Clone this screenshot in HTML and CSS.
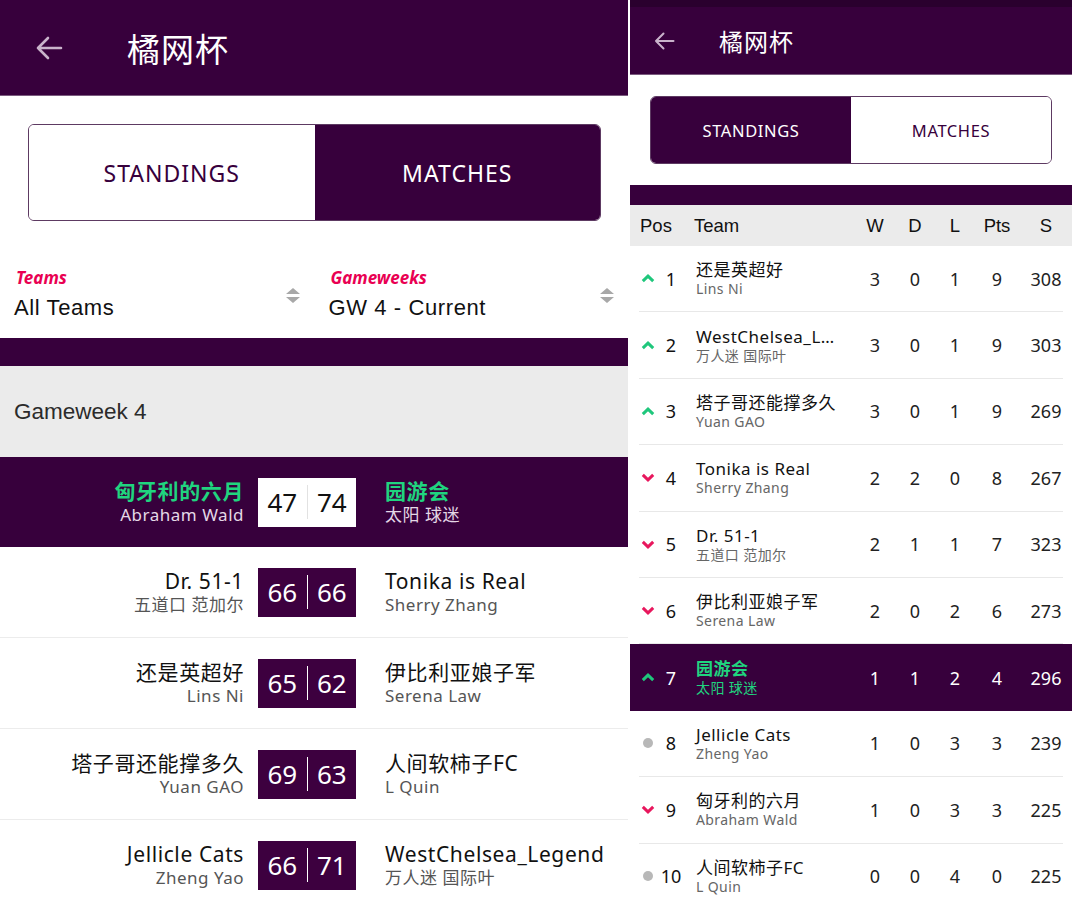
FILE: index.html
```html
<!DOCTYPE html>
<html lang="zh">
<head>
<meta charset="utf-8">
<title>橘网杯</title>
<link rel="stylesheet" href="styles.css">
</head>
<body>
<div class="page">
  <!-- LEFT: MATCHES -->
  <section class="panel left">
    <header class="topbar big">
      <svg class="back" width="28" height="24" viewBox="0 0 28 24"><path d="M26 12H3M13 2L3 12l10 10" fill="none" stroke="#c9b3cb" stroke-width="2.6" stroke-linecap="round" stroke-linejoin="round"/></svg>
      <h1 class="title">橘网杯</h1>
    </header>
    <div class="toggle big">
      <div class="tab">STANDINGS</div>
      <div class="tab on">MATCHES</div>
    </div>
    <div class="filters">
      <div class="filter">
        <div class="ftext"><div class="flabel">Teams</div><div class="fvalue">All Teams</div></div>
        <svg class="sort" width="14" height="16" viewBox="0 0 14 16"><path d="M7 0L14 6H0Z M0 9H14L7 15Z" fill="#a8a8a8"/></svg>
      </div>
      <div class="filter">
        <div class="ftext"><div class="flabel">Gameweeks</div><div class="fvalue">GW 4 - Current</div></div>
        <svg class="sort" width="14" height="16" viewBox="0 0 14 16"><path d="M7 0L14 6H0Z M0 9H14L7 15Z" fill="#a8a8a8"/></svg>
      </div>
    </div>
    <div class="darkbar"></div>
    <div class="gwband">Gameweek 4</div>
    <div class="match hl">
      <div class="side home"><div class="tname">匈牙利的六月</div><div class="mname">Abraham Wald</div></div>
      <div class="score"><span>47</span><span>74</span></div>
      <div class="side away"><div class="tname">园游会</div><div class="mname">太阳 球迷</div></div>
    </div>
    <div class="match">
      <div class="side home"><div class="tname">Dr. 51-1</div><div class="mname">五道口 范加尔</div></div>
      <div class="score"><span>66</span><span>66</span></div>
      <div class="side away"><div class="tname">Tonika is Real</div><div class="mname">Sherry Zhang</div></div>
    </div>
    <div class="match">
      <div class="side home"><div class="tname">还是英超好</div><div class="mname">Lins Ni</div></div>
      <div class="score"><span>65</span><span>62</span></div>
      <div class="side away"><div class="tname">伊比利亚娘子军</div><div class="mname">Serena Law</div></div>
    </div>
    <div class="match">
      <div class="side home"><div class="tname">塔子哥还能撑多久</div><div class="mname">Yuan GAO</div></div>
      <div class="score"><span>69</span><span>63</span></div>
      <div class="side away"><div class="tname">人间软柿子FC</div><div class="mname">L Quin</div></div>
    </div>
    <div class="match">
      <div class="side home"><div class="tname">Jellicle Cats</div><div class="mname">Zheng Yao</div></div>
      <div class="score"><span>66</span><span>71</span></div>
      <div class="side away"><div class="tname">WestChelsea_Legend</div><div class="mname">万人迷 国际叶</div></div>
    </div>
  </section>

  <!-- RIGHT: STANDINGS -->
  <section class="panel right">
    <header class="topbar small">
      <svg class="back" width="21" height="18" viewBox="0 0 21 18"><path d="M19.5 9H2M9.5 1.5L2 9l7.5 7.5" fill="none" stroke="#c9b3cb" stroke-width="2" stroke-linecap="round" stroke-linejoin="round"/></svg>
      <h1 class="title">橘网杯</h1>
    </header>
    <div class="toggle small">
      <div class="tab on">STANDINGS</div>
      <div class="tab">MATCHES</div>
    </div>
    <div class="darkbar thin"></div>
    <div class="thead">
      <div class="c-pos">Pos</div><div class="c-team">Team</div>
      <div class="c-n">W</div><div class="c-n">D</div><div class="c-n">L</div><div class="c-n">Pts</div><div class="c-gap"></div><div class="c-n">S</div>
    </div>
    <div class="srow">
      <svg class="mv up" width="14" height="9" viewBox="0 0 14 9"><path d="M1.8 7.2L7 2.2l5.2 5" fill="none" stroke-width="3"/></svg>
      <div class="pos">1</div><div class="team"><div class="tname">还是英超好</div><div class="mname">Lins Ni</div></div>
      <div class="n">3</div><div class="n">0</div><div class="n">1</div><div class="n">9</div><div></div><div class="n">308</div>
    </div>
    <div class="srow">
      <svg class="mv up" width="14" height="9" viewBox="0 0 14 9"><path d="M1.8 7.2L7 2.2l5.2 5" fill="none" stroke-width="3"/></svg>
      <div class="pos">2</div><div class="team"><div class="tname" title="WestChelsea_Legend">WestChelsea_L…</div><div class="mname">万人迷 国际叶</div></div>
      <div class="n">3</div><div class="n">0</div><div class="n">1</div><div class="n">9</div><div></div><div class="n">303</div>
    </div>
    <div class="srow">
      <svg class="mv up" width="14" height="9" viewBox="0 0 14 9"><path d="M1.8 7.2L7 2.2l5.2 5" fill="none" stroke-width="3"/></svg>
      <div class="pos">3</div><div class="team"><div class="tname">塔子哥还能撑多久</div><div class="mname">Yuan GAO</div></div>
      <div class="n">3</div><div class="n">0</div><div class="n">1</div><div class="n">9</div><div></div><div class="n">269</div>
    </div>
    <div class="srow">
      <svg class="mv down" width="14" height="9" viewBox="0 0 14 9"><path d="M1.8 1.8L7 6.8l5.2-5" fill="none" stroke-width="3"/></svg>
      <div class="pos">4</div><div class="team"><div class="tname">Tonika is Real</div><div class="mname">Sherry Zhang</div></div>
      <div class="n">2</div><div class="n">2</div><div class="n">0</div><div class="n">8</div><div></div><div class="n">267</div>
    </div>
    <div class="srow">
      <svg class="mv down" width="14" height="9" viewBox="0 0 14 9"><path d="M1.8 1.8L7 6.8l5.2-5" fill="none" stroke-width="3"/></svg>
      <div class="pos">5</div><div class="team"><div class="tname">Dr. 51-1</div><div class="mname">五道口 范加尔</div></div>
      <div class="n">2</div><div class="n">1</div><div class="n">1</div><div class="n">7</div><div></div><div class="n">323</div>
    </div>
    <div class="srow">
      <svg class="mv down" width="14" height="9" viewBox="0 0 14 9"><path d="M1.8 1.8L7 6.8l5.2-5" fill="none" stroke-width="3"/></svg>
      <div class="pos">6</div><div class="team"><div class="tname">伊比利亚娘子军</div><div class="mname">Serena Law</div></div>
      <div class="n">2</div><div class="n">0</div><div class="n">2</div><div class="n">6</div><div></div><div class="n">273</div>
    </div>
    <div class="srow hl">
      <svg class="mv up" width="14" height="9" viewBox="0 0 14 9"><path d="M1.8 7.2L7 2.2l5.2 5" fill="none" stroke-width="3"/></svg>
      <div class="pos">7</div><div class="team"><div class="tname">园游会</div><div class="mname">太阳 球迷</div></div>
      <div class="n">1</div><div class="n">1</div><div class="n">2</div><div class="n">4</div><div></div><div class="n">296</div>
    </div>
    <div class="srow">
      <span class="mv dot"></span>
      <div class="pos">8</div><div class="team"><div class="tname">Jellicle Cats</div><div class="mname">Zheng Yao</div></div>
      <div class="n">1</div><div class="n">0</div><div class="n">3</div><div class="n">3</div><div></div><div class="n">239</div>
    </div>
    <div class="srow">
      <svg class="mv down" width="14" height="9" viewBox="0 0 14 9"><path d="M1.8 1.8L7 6.8l5.2-5" fill="none" stroke-width="3"/></svg>
      <div class="pos">9</div><div class="team"><div class="tname">匈牙利的六月</div><div class="mname">Abraham Wald</div></div>
      <div class="n">1</div><div class="n">0</div><div class="n">3</div><div class="n">3</div><div></div><div class="n">225</div>
    </div>
    <div class="srow">
      <span class="mv dot"></span>
      <div class="pos">10</div><div class="team"><div class="tname">人间软柿子FC</div><div class="mname">L Quin</div></div>
      <div class="n">0</div><div class="n">0</div><div class="n">4</div><div class="n">0</div><div></div><div class="n">225</div>
    </div>
  </section>
</div>
</body>
</html>
```

FILE: styles.css
```css
* { box-sizing: border-box; margin: 0; padding: 0; }
html, body { background: #fff; }
body {
  width: 1080px;
  height: 907px;
  overflow: hidden;
  font-family: "Noto Sans", "Noto Sans CJK SC", sans-serif;
  color: #111;
}
.page { display: flex; gap: 2px; height: 907px; }
.panel { overflow: hidden; display: flex; flex-direction: column; }
.left { width: 628px; }
.right { width: 442px; }

/* top bar */
.topbar {
  background: #37003c;
  display: flex;
  align-items: center;
  color: #fff;
  flex: none;
}
.topbar .title { font-family: "Noto Sans CJK SC", sans-serif; font-weight: 400; color: #fff; }
.topbar.big { height: 96px; padding-left: 35px; border-bottom: 1px solid #7a5a7e; }
.topbar.big .title { font-size: 33px; margin-left: 64px; letter-spacing: 1px; }
.topbar.small { height: 75px; padding-left: 24px; border-top: 7px solid #2a002e; border-bottom: 1px solid #7a5a7e; }
.topbar.small .title { font-size: 24px; margin-left: 44px; letter-spacing: 1px; }

/* toggle */
.toggle {
  display: flex;
  border: 1.5px solid #5d3a62;
  border-radius: 6px;
  overflow: hidden;
  flex: none;
}
.toggle .tab {
  flex: 1;
  display: flex; align-items: center; justify-content: center;
  color: #37003c;
  background: #fff;
}
.toggle .tab.on { background: #37003c; color: #fff; }
.toggle.big { margin: 28px 27px 0 28px; height: 97px; }
.toggle.big .tab { font-size: 23px; letter-spacing: 1px; }
.toggle.small { margin: 21px 20px 0 20px; height: 68px; }
.toggle.small .tab { font-size: 16.5px; letter-spacing: 0.6px; }

/* filters */
.filters { display: flex; gap: 29px; padding: 44px 14px 0 14px; height: 117px; flex: none; }
.filter { flex: 1; display: flex; align-items: center; justify-content: space-between; height: 58px; }
.flabel { color: #e90052; font-style: italic; font-weight: 700; font-size: 17px; line-height: 23px; padding-left: 2px; }
.fvalue { font-family: "Liberation Sans", "Noto Sans CJK SC", sans-serif; font-size: 22px; letter-spacing: 0.6px; line-height: 30px; margin-top: 4px; color: #111; }
.sort { margin-top: 4px; }

.darkbar { background: #37003c; height: 28px; flex: none; }
.darkbar.thin { height: 20px; margin-top: 21px; }
.gwband {
  background: #ebebeb;
  height: 91px;
  display: flex; align-items: center;
  padding-left: 14px;
  font-family: "Liberation Sans", sans-serif;
  font-size: 22.5px;
  color: #2b2b2b;
  flex: none;
}

/* matches */
.match {
  display: flex;
  align-items: center;
  height: 91px;
  border-bottom: 1.5px solid #ececec;
  flex: none;
}
.match.hl { background: #37003c; height: 90px; border-bottom: none; }
.side { display: flex; flex-direction: column; }
.side.home { width: 244px; text-align: right; align-items: flex-end; }
.side.away { margin-left: 29px; }
.side .tname { font-size: 21px; letter-spacing: 0.6px; line-height: 25px; color: #111; white-space: nowrap; }
.side .mname { font-size: 17px; letter-spacing: 0.5px; line-height: 21px; color: #555; white-space: nowrap; }
.match.hl .tname { color: #20d47f; font-weight: 700; }
.match.hl .mname { color: #e4d8e6; }
.score {
  margin-left: 14px;
  width: 98px; height: 49px;
  background: #3d003f;
  display: flex; align-items: center;
}
.score span {
  flex: 1; text-align: center;
  color: #fff; font-size: 26px; line-height: 49px;
}
.score span + span { border-left: 1.5px solid #fff; line-height: 34px; }
.match.hl .score { background: #fff; }
.match.hl .score span { color: #111; }
.match.hl .score span + span { border-left-color: #e2e2e2; }

/* standings */
.thead, .srow {
  display: grid;
  grid-template-columns: 17px 30px 1fr 40px 40px 40px 44px 10px 34px;
  align-items: center;
}
.thead {
  background: #ebebeb;
  height: 41px;
  padding: 0 9px;
  font-family: "Liberation Sans", sans-serif;
  font-size: 18.5px;
  color: #111;
  flex: none;
}
.thead .c-pos { grid-column: 1 / span 2; padding-left: 1px; }
.thead .c-team { padding-left: 8px; }
.thead .c-n { text-align: center; }
.srow {
  margin: 0 9px;
  height: 66.4px;
  border-bottom: 1px solid #e8e8e8;
  flex: none;
}
.srow.hl { margin: 0; padding: 0 9px; background: #37003c; border-bottom: none; }
.mv { justify-self: center; }
.mv.up path { stroke: #1fc77c; }
.mv.down path { stroke: #e8175d; }
.mv.dot { width: 10px; height: 10px; border-radius: 50%; background: #b8b8b8; }
.pos { text-align: center; font-size: 18px; color: #111; }
.team { padding-left: 10px; min-width: 0; display: flex; flex-direction: column; }
.team .tname { font-size: 17px; letter-spacing: 0.5px; line-height: 21px; color: #111; white-space: nowrap; }
.team .mname { font-size: 14px; letter-spacing: 0.4px; line-height: 18px; color: #666; white-space: nowrap; }
.n { text-align: center; font-size: 18px; color: #222; }
.srow.hl .pos, .srow.hl .n { color: #fff; }
.srow.hl .tname, .srow.hl .mname { color: #20d47f; }
.srow.hl .tname { font-weight: 700; }
```
